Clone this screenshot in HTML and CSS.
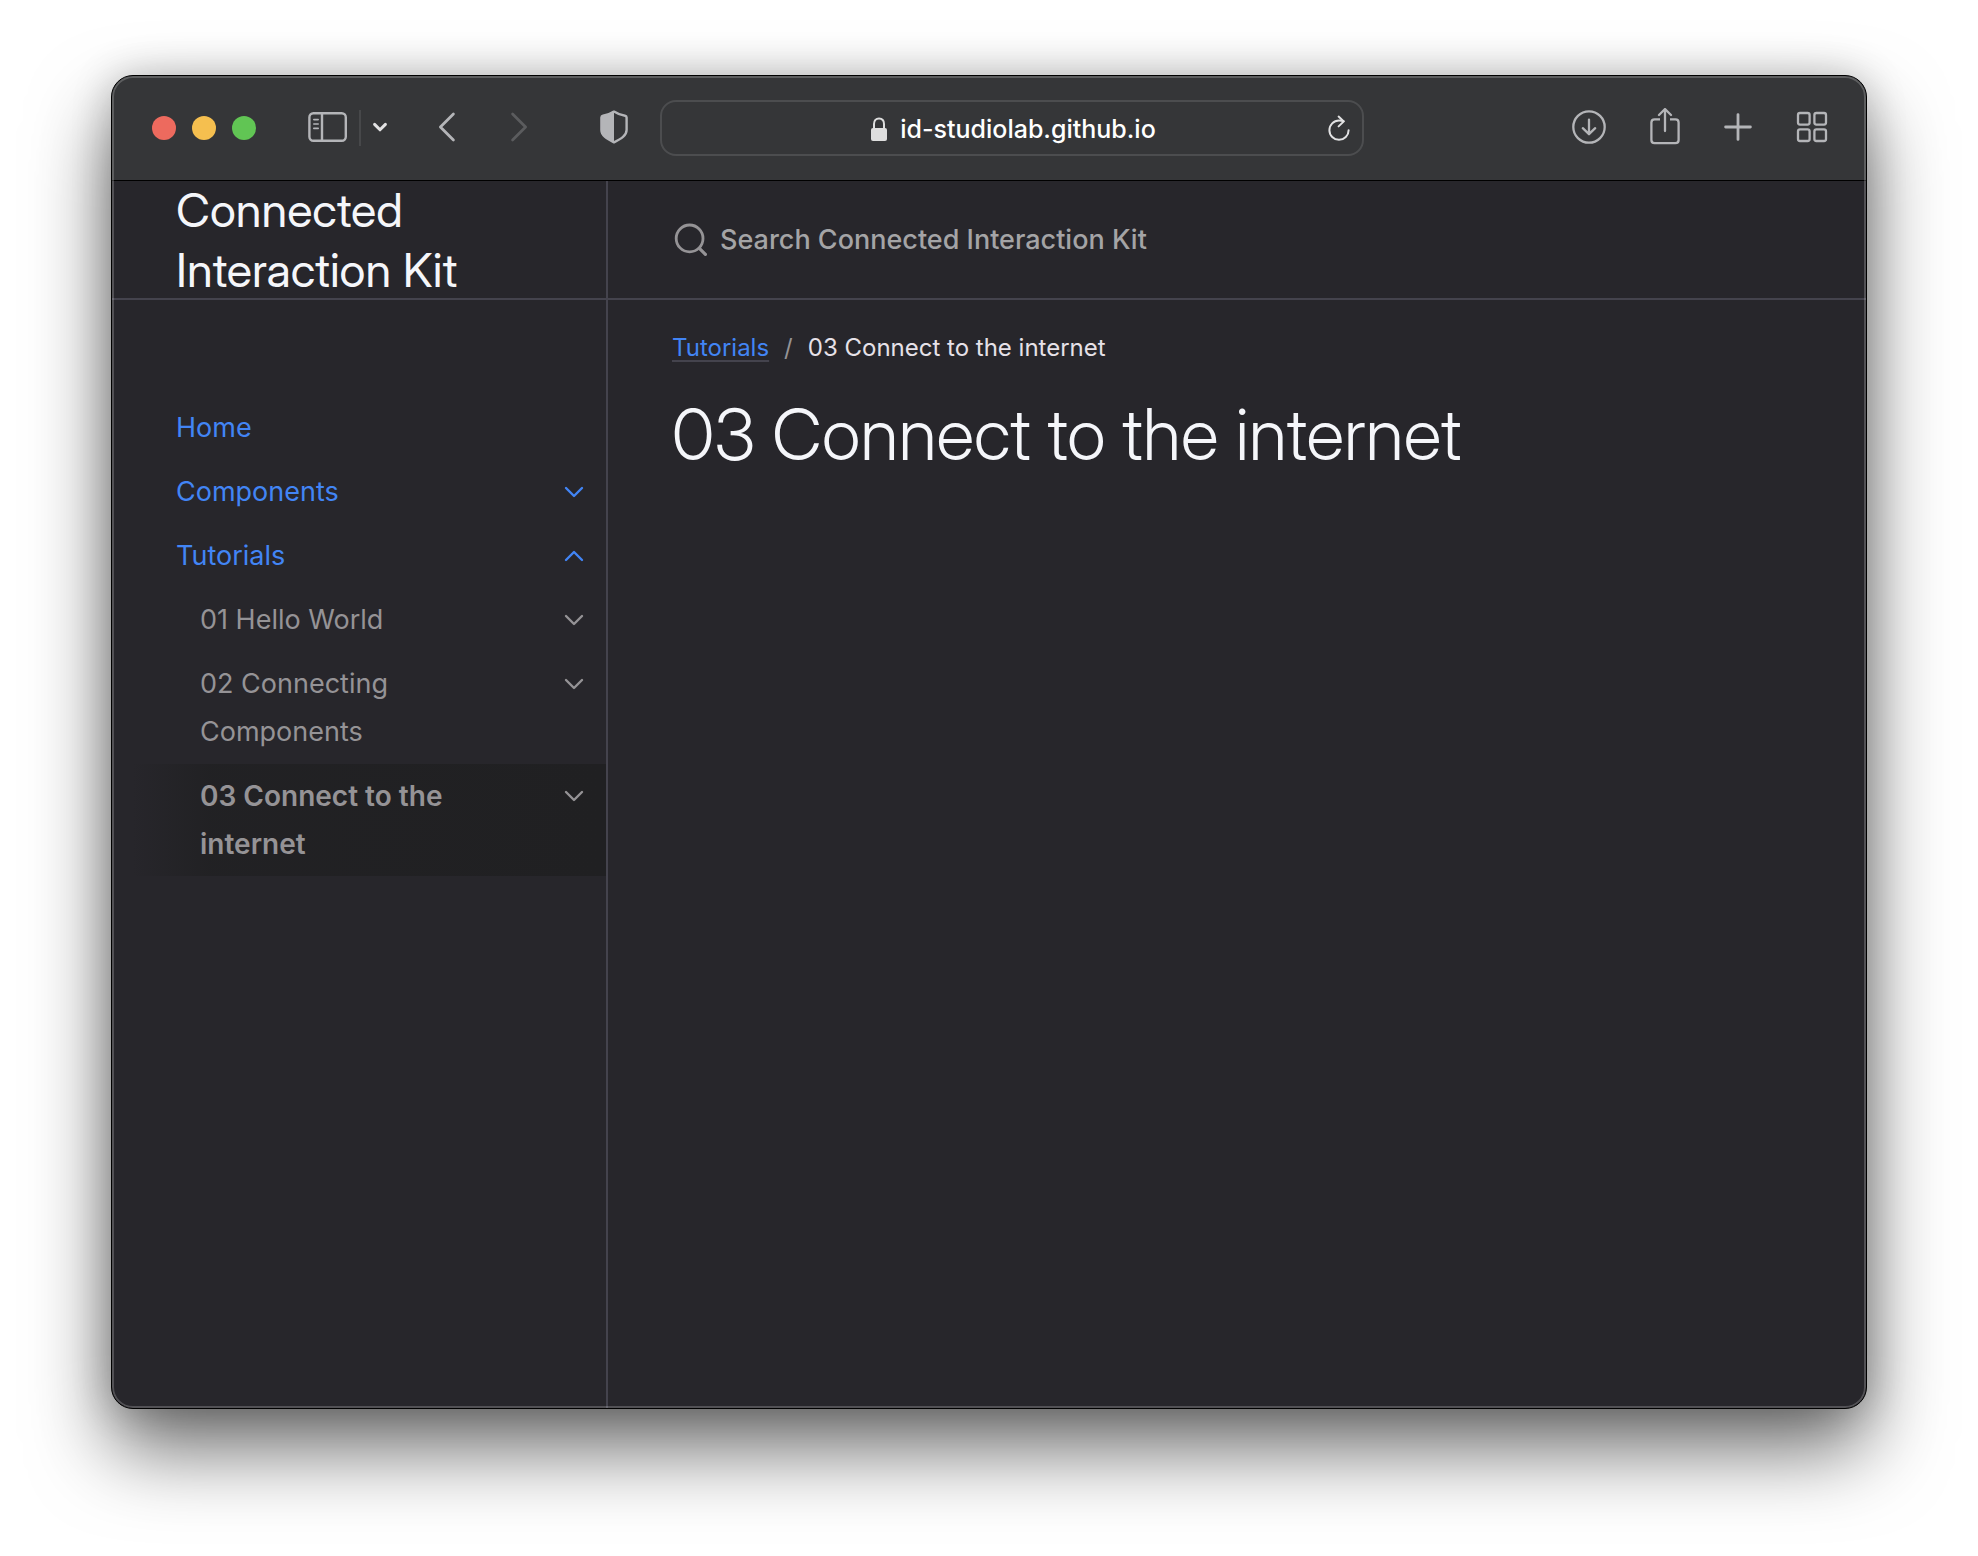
FILE: index.html
```html
<!DOCTYPE html>
<html lang="en">
<head>
<meta charset="utf-8">
<meta name="viewport" content="width=device-width, initial-scale=1">
<title>03 Connect to the internet</title>
<link rel="stylesheet" href="styles.css">
</head>
<body>
<div class="window">
  <div class="toolbar">
    <div class="toolbar-start">
      <div class="lights">
        <button class="light light-close" aria-label="Close"></button>
        <button class="light light-minimize" aria-label="Minimize"></button>
        <button class="light light-zoom" aria-label="Zoom"></button>
      </div>
      <div class="sidebar-tools">
        <button class="tool" aria-label="Show sidebar">
          <svg width="40" height="32" viewBox="0 0 40 32" fill="none" stroke="currentColor" stroke-width="2.4"><rect x="1.4" y="2.2" width="36.4" height="27.6" rx="4"/><path d="M14 2v28"/><path stroke-width="1.6" stroke-linecap="round" d="M5.8 8.6h4.4M5.8 13h4.4M5.8 17.4h4.4"/></svg>
        </button>
        <span class="divider"></span>
        <button class="tool tool-bright" aria-label="Tab groups">
          <svg width="16" height="12" viewBox="0 0 16 12" fill="none" stroke="currentColor" stroke-width="3" stroke-linecap="round" stroke-linejoin="round"><path d="M2.6 3.4 8 8.8l5.400-5.400"/></svg>
        </button>
      </div>
      <div class="history">
        <button class="tool" aria-label="Back">
          <svg width="18" height="32" viewBox="0 0 18 32" fill="none" stroke="currentColor" stroke-width="2.8" stroke-linecap="round" stroke-linejoin="round"><path d="M15.400 3 2.400 16l13 13"/></svg>
        </button>
        <button class="tool" aria-label="Forward" disabled>
          <svg width="18" height="32" viewBox="0 0 18 32" fill="none" stroke="currentColor" stroke-width="2.8" stroke-linecap="round" stroke-linejoin="round"><path d="m2.600 3 13 13-13 13"/></svg>
        </button>
      </div>
      <button class="tool shield" aria-label="Privacy report">
        <svg width="28" height="34" viewBox="0 0 28 34" fill="none" stroke="currentColor" stroke-width="2.4" stroke-linejoin="round"><path d="M14 1.6c4 2.6 7.600 3.800 11 4.200 1 .2 1.600.8 1.600 1.800v12.400c0 5.600-5.400 8.800-12.600 12.400C6.800 28.800 1.400 25.600 1.400 20V7.600c0-1 .6-1.600 1.600-1.800 3.400-.4 7-1.600 11-4.200z"/><path fill="currentColor" stroke="none" d="M14 1.400v31C6.800 28.800 1.400 25.600 1.400 20V7.600c0-1 .6-1.600 1.600-1.800 3.400-.4 7-1.600 11-4.400z"/></svg>
      </button>
    </div>
    <div class="address">
      <div class="site">
        <svg width="18" height="26" viewBox="0 0 18 26" fill="none"><rect x="1" y="12" width="16" height="13" rx="2" fill="#dedede"/><path d="M4 13V8c0-3.400 2-5.600 5-5.600s5 2.200 5 5.600v5" stroke="#dedede" stroke-width="2"/></svg>
        <span>id-studiolab.github.io</span>
      </div>
      <button class="tool tool-bright" aria-label="Reload">
        <svg width="22" height="28" viewBox="0 0 22 28" fill="none" stroke="currentColor" stroke-width="2" stroke-linecap="round" stroke-linejoin="round"><path d="M20.600 16.200a9.600 9.600 0 1 1-9.600-9.600c1.600 0 3.200.2 4.600.6"/><path d="m10.600 2.600 5.200 4.800-5.200 5"/></svg>
      </button>
    </div>
    <div class="toolbar-end">
      <button class="tool" aria-label="Downloads">
        <svg width="34" height="34" viewBox="0 0 34 34" fill="none" stroke="currentColor" stroke-width="2.300" stroke-linecap="round" stroke-linejoin="round"><circle cx="17" cy="17" r="15.700"/><path d="M17 9.600v14.400M10.800 18.200l6.200 6 6.200-6"/></svg>
      </button>
      <button class="tool" aria-label="Share">
        <svg width="30" height="38" viewBox="0 0 30 38" fill="none" stroke="currentColor" stroke-width="2.300" stroke-linecap="round" stroke-linejoin="round"><path stroke-linecap="butt" d="M10 11.400H4.600c-2 0-3.200 1.200-3.200 3.200V32c0 2 1.200 3.200 3.200 3.200h20.800c2 0 3.200-1.200 3.200-3.200V14.600c0-2-1.200-3.200-3.200-3.200H20"/><path d="M15 23V1.200M9 7l6-6 6 6"/></svg>
      </button>
      <button class="tool" aria-label="New tab">
        <svg width="28" height="28" viewBox="0 0 28 28" fill="none" stroke="currentColor" stroke-width="2.800" stroke-linecap="round"><path d="M14 1.600v24.800M1.600 14h24.800"/></svg>
      </button>
      <button class="tool" aria-label="Tab overview">
        <svg width="32" height="32" viewBox="0 0 32 32" fill="none" stroke="currentColor" stroke-width="2.300"><rect x="2" y="2" width="11.600" height="11.600" rx="2"/><rect x="18.400" y="2" width="11.600" height="11.600" rx="2"/><rect x="2" y="18.400" width="11.600" height="11.600" rx="2"/><rect x="18.400" y="18.400" width="11.600" height="11.600" rx="2"/></svg>
      </button>
    </div>
  </div>

  <div class="page">
    <aside class="sidebar">
      <header class="site-header"><a class="site-title" href="#home">Connected Interaction Kit</a></header>
      <nav class="site-nav" aria-label="Main">
        <ul class="nav-list">
          <li><div class="nav-row"><a class="nav-link" href="#home">Home</a></div></li>
          <li><div class="nav-row"><a class="nav-link" href="#components">Components</a><button class="expander" aria-label="Expand Components"><svg class="chevron" viewBox="0 0 20 12"><path d="m2 2 8 8 8-8"/></svg></button></div></li>
          <li>
            <div class="nav-row"><a class="nav-link" href="#tutorials">Tutorials</a><button class="expander" aria-label="Collapse Tutorials"><svg class="chevron" viewBox="0 0 20 12"><path d="m2 10 8-8 8 8"/></svg></button></div>
            <ul class="nav-list nav-sublist">
              <li><div class="nav-row"><a class="nav-link" href="#t1">01 Hello World</a><button class="expander" aria-label="Expand 01"><svg class="chevron" viewBox="0 0 20 12"><path d="m2 2 8 8 8-8"/></svg></button></div></li>
              <li><div class="nav-row"><a class="nav-link" href="#t2">02 Connecting Components</a><button class="expander" aria-label="Expand 02"><svg class="chevron" viewBox="0 0 20 12"><path d="m2 2 8 8 8-8"/></svg></button></div></li>
              <li><div class="nav-row nav-row-active"><a class="nav-link" href="#t3" aria-current="page">03 Connect to the internet</a><button class="expander" aria-label="Expand 03"><svg class="chevron" viewBox="0 0 20 12"><path d="m2 2 8 8 8-8"/></svg></button></div></li>
            </ul>
          </li>
        </ul>
      </nav>
    </aside>
    <main class="main">
      <div class="search">
        <label class="search-icon" for="search" aria-label="Search"><svg width="36" height="36" viewBox="0 0 36 36" fill="none" stroke="currentColor" stroke-width="2.800"><circle cx="17.600" cy="16.400" r="13.400"/><path stroke-width="3.200" stroke-linecap="round" d="m27.400 26.400 6 6"/></svg></label>
        <input class="search-input" id="search" type="text" placeholder="Search Connected Interaction Kit">
      </div>
      <div class="content">
        <nav aria-label="Breadcrumb">
          <ol class="breadcrumb">
            <li><a href="#tutorials">Tutorials</a></li>
            <li class="slash" aria-hidden="true">/</li>
            <li>03 Connect to the internet</li>
          </ol>
        </nav>
        <h1 class="heading">03 Connect to the internet</h1>
      </div>
    </main>
  </div>
</div>
</body>
</html>
```
FILE: styles.css
```css
:root {
  --surface: #27262b;
  --line: #44434d;
  --blue: #4285f5;
  --grey: #959396;
  --light: #f5f6fa;
}

* {
  box-sizing: border-box;
}

body {
  margin: 0;
  min-height: 100vh;
  padding: 75px 111px 147px;
  display: flex;
  background: #fff;
  color: #e6e1e8;
  font-family: Inter, "Liberation Sans", sans-serif;
}

button {
  padding: 0;
  border: 0;
  background: none;
  color: inherit;
  font: inherit;
}

svg {
  display: block;
}

.window {
  position: relative;
  flex: 1;
  min-width: 0;
  display: flex;
  flex-direction: column;
  border: 1px solid #000;
  border-radius: 22px;
  background: var(--surface);
  overflow: hidden;
  box-shadow: 0 40px 80px rgba(0, 0, 0, 0.58), 0 0 40px rgba(0, 0, 0, 0.2);
}

/* Thin light rim drawn over the whole window */
.window::after {
  content: "";
  position: absolute;
  inset: 0;
  border: 2px solid rgba(255, 255, 255, 0.2);
  border-radius: 21px;
  pointer-events: none;
}

.toolbar {
  display: grid;
  grid-template-columns: 548px minmax(0, 704px) 1fr;
  align-items: center;
  height: 105px;
  border-bottom: 1px solid #000;
  background: #353638;
  color: #b4b5b8;
}

.toolbar-start {
  display: flex;
  align-items: center;
  padding: 0 32px 0 40px;
}

.toolbar-start .tool,
.toolbar-end .tool {
  padding-bottom: 2px;
}

.lights {
  display: flex;
  gap: 16px;
  margin-right: 52px;
}

.light {
  width: 24px;
  height: 24px;
  border-radius: 50%;
}

.light-close { background: #ed6a5e; }
.light-minimize { background: #f5bf4f; }
.light-zoom { background: #61c554; }

.sidebar-tools {
  display: flex;
  align-items: center;
  gap: 11px;
  margin-right: 50px;
}

.divider {
  width: 2px;
  height: 36px;
  background: #47484a;
}

.tool-bright {
  color: #e2e2e3;
}

.tool:disabled {
  color: #5b5c5e;
}

.history {
  display: flex;
  gap: 54px;
}

.shield {
  margin-left: auto;
}

.address {
  display: flex;
  align-items: center;
  height: 56px;
  padding: 0 12px;
  border: 2px solid #4c4d4f;
  border-radius: 16px;
}

.site {
  flex: 1;
  display: flex;
  align-items: center;
  justify-content: center;
  gap: 12px;
  padding: 2px 0 0 24px;
  color: #fff;
  font-size: 25px;
  font-weight: 500;
}

.toolbar-end {
  display: flex;
  align-items: center;
  justify-content: flex-end;
  gap: 44px;
  padding-right: 38px;
}

.page {
  flex: 1;
  display: flex;
}

.sidebar {
  flex: 0 0 496px;
  border-right: 2px solid var(--line);
}

.site-header {
  display: flex;
  align-items: center;
  height: 119px;
  padding: 0 64px;
  border-bottom: 2px solid var(--line);
}

.site-title {
  color: var(--light);
  font-family: "Inter Display", Inter, "Liberation Sans", sans-serif;
  font-size: 47px;
  line-height: 60px;
  text-decoration: none;
}

.site-nav {
  padding-top: 96px;
}

.nav-list {
  margin: 0;
  padding: 0;
  list-style: none;
}

.nav-row {
  display: flex;
  align-items: flex-start;
  color: var(--blue);
}

.nav-link {
  flex: 1;
  padding: 8px 0 8px 64px;
  color: inherit;
  font-size: 27px;
  line-height: 48px;
  text-decoration: none;
}

.nav-sublist .nav-row {
  color: var(--grey);
}

.nav-sublist .nav-link {
  padding-left: 88px;
}

.nav-row-active {
  background: linear-gradient(-90deg, #202022, rgba(32, 32, 34, 0.8) 80%, rgba(32, 32, 34, 0) 96%);
}

.nav-row-active .nav-link {
  font-size: 28px;
  font-weight: 600;
}

.expander {
  display: grid;
  place-items: center;
  width: 64px;
  height: 64px;
}

.chevron {
  width: 20px;
  height: 12px;
  fill: none;
  stroke: currentColor;
  stroke-width: 2.4;
  stroke-linecap: round;
  stroke-linejoin: round;
}

.main {
  flex: 1;
  min-width: 0;
}

.search {
  display: flex;
  align-items: center;
  gap: 12px;
  height: 119px;
  padding: 0 64px;
  border-bottom: 2px solid var(--line);
}

.search-icon {
  color: #959396;
}

.search-input {
  flex: 1;
  padding: 0;
  border: 0;
  outline: 0;
  background: none;
  color: inherit;
  font: inherit;
  font-size: 27px;
  font-weight: 500;
}

.search-input::placeholder {
  color: #a4a4a6;
  opacity: 1;
}

.content {
  padding: 28px 64px;
}

.breadcrumb {
  display: flex;
  gap: 15px;
  margin: 0 0 26px;
  padding: 0;
  list-style: none;
  font-size: 24px;
  line-height: 40px;
}

.breadcrumb a {
  color: var(--blue);
  text-decoration: underline;
  text-decoration-color: var(--line);
  text-decoration-thickness: 2px;
  text-underline-offset: 4px;
}

.slash {
  color: var(--grey);
}

.heading {
  margin: 0;
  color: var(--light);
  font-family: "Inter Display", Inter, "Liberation Sans", sans-serif;
  font-size: 71px;
  font-weight: 300;
  line-height: 80px;
}
```
